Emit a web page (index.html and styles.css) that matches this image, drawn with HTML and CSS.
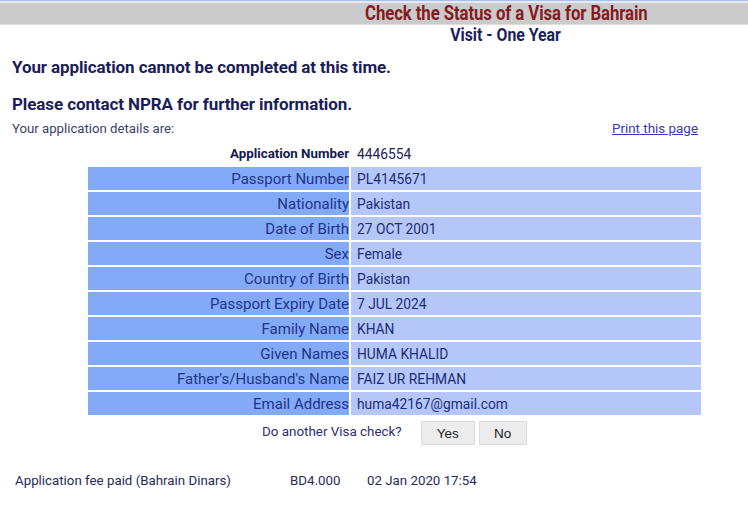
FILE: index.html
```html
<!DOCTYPE html>
<html>
<head>
<meta charset="utf-8">
<link rel="stylesheet" href="styles.css">
</head>
<body>
<div class="topline"></div>
<div class="band">
  <div class="band-inner"><span class="title">Check the Status of a Visa for Bahrain</span></div>
</div>
<div class="subtitle-row"><span class="subtitle">Visit - One Year</span></div>
<h1 class="msg msg1">Your application cannot be completed at this time.</h1>
<h2 class="msg msg2">Please contact NPRA for further information.</h2>
<div class="details-row">
  <span class="details">Your application details are:</span>
  <a class="print" href="#">Print this page</a>
</div>
<table class="info">
  <tr class="head"><th>Application Number</th><td>4446554</td></tr>
  <tr><th>Passport Number</th><td>PL4145671</td></tr>
  <tr><th>Nationality</th><td>Pakistan</td></tr>
  <tr><th>Date of Birth</th><td>27 OCT 2001</td></tr>
  <tr><th>Sex</th><td>Female</td></tr>
  <tr><th>Country of Birth</th><td>Pakistan</td></tr>
  <tr><th>Passport Expiry Date</th><td>7 JUL 2024</td></tr>
  <tr><th>Family Name</th><td>KHAN</td></tr>
  <tr><th>Given Names</th><td>HUMA KHALID</td></tr>
  <tr><th>Father's/Husband's Name</th><td>FAIZ UR REHMAN</td></tr>
  <tr><th>Email Address</th><td>huma42167@gmail.com</td></tr>
</table>
<div class="again">
  <span class="again-text">Do another Visa check?</span>
  <button class="btn yes">Yes</button>
  <button class="btn no">No</button>
</div>
<div class="fee">
  <span class="fee-label">Application fee paid (Bahrain Dinars)</span>
  <span class="fee-amount">BD4.000</span>
  <span class="fee-date">02 Jan 2020 17:54</span>
</div>
</body>
</html>
```
FILE: styles.css
```css
html, body {
  margin: 0;
  padding: 0;
  background: #ffffff;
  font-family: Roboto, "Noto Sans", sans-serif;
  color: #1f2a63;
}

.topline {
  height: 1px;
  background: #a9bfe9;
  border-bottom: 2px solid #e3e9f5;
}

.band {
  height: 21px;
  background: #cbcbcb;
  border-bottom: 1px solid #dedede;
}

.band-inner {
  padding-left: 264px;
  text-align: center;
  line-height: 21px;
}

.title {
  display: inline-block;
  font-weight: 700;
  font-size: 19.5px;
  color: #861b1f;
  transform: scaleX(0.86);
  letter-spacing: -0.1px;
}

.subtitle-row {
  padding-left: 264px;
  text-align: center;
  line-height: 20px;
}

.subtitle {
  display: inline-block;
  font-weight: 700;
  font-size: 17.6px;
  color: #1b1f5e;
  transform: scaleX(0.9);
}

.msg {
  margin: 0;
  padding-left: 12px;
  font-weight: 700;
  color: #1a1d58;
  letter-spacing: -0.1px;
}

.msg1 {
  font-size: 17px;
  line-height: 20px;
  margin-top: 11px;
}

.msg2 {
  font-size: 17px;
  line-height: 20px;
  margin-top: 17px;
}

.details-row {
  display: flex;
  justify-content: space-between;
  align-items: baseline;
  padding: 0 50px 0 12px;
  margin-top: 7px;
  line-height: 16px;
}

.details {
  font-size: 13.2px;
  color: #3a3f6a;
}

.print {
  font-size: 13.4px;
  color: #3838b8;
  text-decoration: underline;
}

.info {
  margin: 3px 0 0 86px;
  width: 617px;
  border-collapse: separate;
  border-spacing: 2px;
  font-size: 13.8px;
}

.info th {
  width: 261px;
  height: 23px;
  padding: 0;
  text-align: right;
  font-weight: 400;
  font-size: 15px;
  background: #82aaf6;
  color: #23348a;
  white-space: nowrap;
}

.info td {
  height: 23px;
  padding: 0 0 0 6px;
  background: #b5c7f9;
  color: #1e2c75;
}

.info tr.head th {
  background: #ffffff;
  font-weight: 700;
  font-size: 13.3px;
  color: #141a4f;
}

.info tr.head td {
  background: #ffffff;
  color: #1e2456;
}

.again {
  display: flex;
  align-items: center;
  padding-left: 262px;
  margin-top: 4px;
}

.again-text {
  font-size: 13.4px;
  color: #2b2f78;
  margin-right: 19px;
  position: relative;
  top: -2px;
}

.btn {
  font-family: "Liberation Sans", Arial, sans-serif;
  font-size: 13.5px;
  color: #222;
  background: #ececec;
  border: 1px solid #dcdcdc;
  height: 24px;
  padding: 0;
  margin: 0;
}

.yes {
  width: 54px;
  margin-right: 4px;
}

.no {
  width: 48px;
}

.fee {
  display: flex;
  padding-left: 15px;
  margin-top: 28px;
  font-size: 13.3px;
  color: #272b5a;
  line-height: 16px;
}

.fee-label {
  width: 275px;
}

.fee-amount {
  width: 77px;
}
```
